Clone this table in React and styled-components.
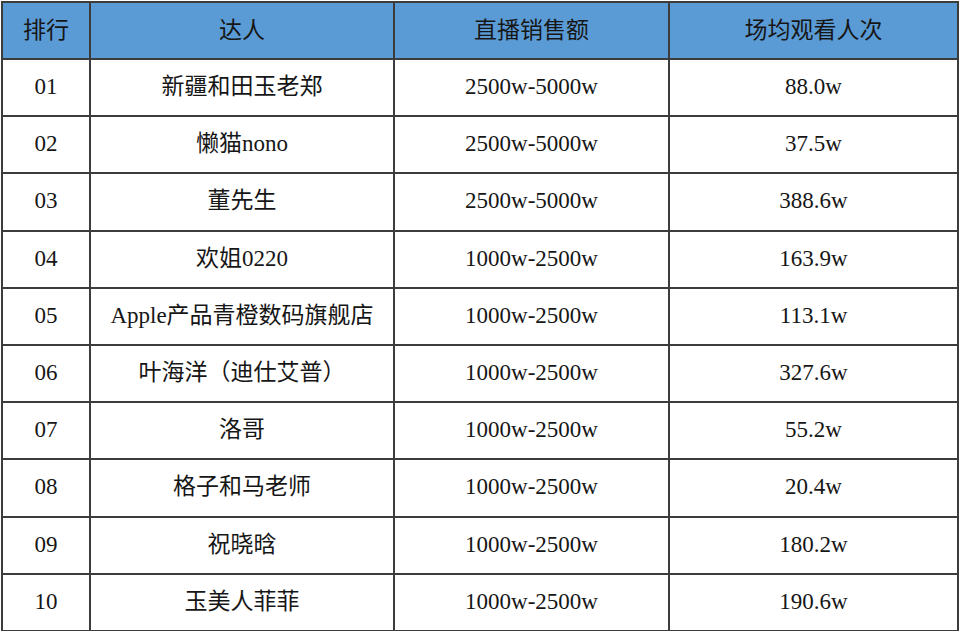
import React from 'react';
import styled, { createGlobalStyle } from 'styled-components';

const GlobalStyle = createGlobalStyle`
  html, body {
    margin: 0;
    padding: 0;
    background: #ffffff;
  }
`;

const rows = [
  ['01', '新疆和田玉老郑', '2500w-5000w', '88.0w'],
  ['02', '懒猫nono', '2500w-5000w', '37.5w'],
  ['03', '董先生', '2500w-5000w', '388.6w'],
  ['04', '欢姐0220', '1000w-2500w', '163.9w'],
  ['05', 'Apple产品青橙数码旗舰店', '1000w-2500w', '113.1w'],
  ['06', '叶海洋（迪仕艾普）', '1000w-2500w', '327.6w'],
  ['07', '洛哥', '1000w-2500w', '55.2w'],
  ['08', '格子和马老师', '1000w-2500w', '20.4w'],
  ['09', '祝晓晗', '1000w-2500w', '180.2w'],
  ['10', '玉美人菲菲', '1000w-2500w', '190.6w'],
];

const Page = styled.div`
  padding: 1px;
`;

const Table = styled.table`
  width: 956px;
  height: 628px;
  border-collapse: collapse;
  table-layout: fixed;
  font-family: "Liberation Serif", "Noto Sans CJK SC", serif;
  font-size: 23px;
  color: #161616;
`;

const Col = styled.col`
  width: ${(p) => p.$w}px;
`;

const HeadRow = styled.tr`
  height: 57px;
  background: #5b9bd5;
`;

const Row = styled.tr`
  height: 57.2px;
  background: #ffffff;
`;

const HeadCell = styled.th`
  border: 2px solid #3c3c3c;
  font-weight: 400;
  text-align: center;
  vertical-align: middle;
  padding: 0;
  line-height: 1;
`;

const Cell = styled.td`
  border: 2px solid #3c3c3c;
  text-align: center;
  vertical-align: middle;
  padding: 0 0 2px;
  line-height: 1;
  white-space: nowrap;
`;

export default function App() {
  return (
    <Page>
      <GlobalStyle />
      <Table>
        <colgroup>
          <Col $w={88} />
          <Col $w={304} />
          <Col $w={275} />
          <Col $w={289} />
        </colgroup>
        <thead>
          <HeadRow>
            <HeadCell>排行</HeadCell>
            <HeadCell>达人</HeadCell>
            <HeadCell>直播销售额</HeadCell>
            <HeadCell>场均观看人次</HeadCell>
          </HeadRow>
        </thead>
        <tbody>
          {rows.map((r) => (
            <Row key={r[0]}>
              {r.map((v, i) => (
                <Cell key={i}>{v}</Cell>
              ))}
            </Row>
          ))}
        </tbody>
      </Table>
    </Page>
  );
}
